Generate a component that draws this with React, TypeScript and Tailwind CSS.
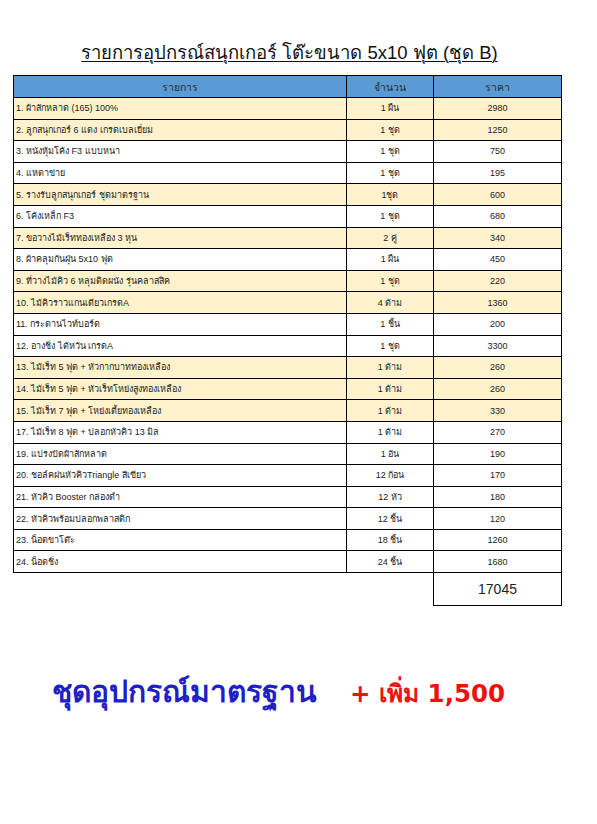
import React from "react";

const rows = [
  { name: "1. ผ้าสักหลาด (165) 100%", qty: "1 ผืน", price: "2980", hl: true },
  { name: "2. ลูกสนุกเกอร์ 6 แดง เกรดเบลเยี่ยม", qty: "1 ชุด", price: "1250", hl: true },
  { name: "3. หนังหุ้มโค้ง F3 แบบหนา", qty: "1 ชุด", price: "750", hl: false },
  { name: "4. แหตาข่าย", qty: "1 ชุด", price: "195", hl: false },
  { name: "5. รางรับลูกสนุกเกอร์ ชุดมาตรฐาน", qty: "1ชุด", price: "600", hl: true },
  { name: "6. โค้งเหล็ก F3", qty: "1 ชุด", price: "680", hl: false },
  { name: "7. ขอวางไม้เร็ททองเหลือง 3 หุน", qty: "2 คู่", price: "340", hl: true },
  { name: "8. ผ้าคลุมกันฝุ่น 5x10 ฟุต", qty: "1 ผืน", price: "450", hl: false },
  { name: "9. ที่วางไม้คิว 6 หลุมติดผนัง รุ่นคลาสสิค", qty: "1 ชุด", price: "220", hl: true },
  { name: "10. ไม้คิวราวแกนเดียวเกรดA", qty: "4 ด้าม", price: "1360", hl: true },
  { name: "11. กระดานไวท์บอร์ด", qty: "1 ชิ้น", price: "200", hl: false },
  { name: "12. อางชิ่ง ไต้หวัน เกรดA", qty: "1 ชุด", price: "3300", hl: false },
  { name: "13. ไม้เร็ท 5 ฟุต + หัวกากบาททองเหลือง", qty: "1 ด้าม", price: "260", hl: true },
  { name: "14. ไม้เร็ท 5 ฟุต + หัวเร็ทโหย่งสูงทองเหลือง", qty: "1 ด้าม", price: "260", hl: true },
  { name: "15. ไม้เร็ท 7 ฟุต + โหย่งเตี้ยทองเหลือง", qty: "1 ด้าม", price: "330", hl: true },
  { name: "17. ไม้เร็ท 8 ฟุต + ปลอกหัวคิว 13 มิล", qty: "1 ด้าม", price: "270", hl: false },
  { name: "19. แปรงปัดผ้าสักหลาด", qty: "1 อัน", price: "190", hl: false },
  { name: "20. ชอล์คฝนหัวคิวTriangle สีเขียว", qty: "12 ก้อน", price: "170", hl: false },
  { name: "21. หัวคิว Booster กล่องดำ", qty: "12 หัว", price: "180", hl: false },
  { name: "22. หัวคิวพร้อมปลอกพลาสติก", qty: "12 ชิ้น", price: "120", hl: false },
  { name: "23. น็อตขาโต๊ะ", qty: "18 ชิ้น", price: "1260", hl: false },
  { name: "24. น็อตชิ่ง", qty: "24 ชิ้น", price: "1680", hl: false },
];

export default function App() {
  return (
    <div className="w-[597px] h-[824px] bg-white font-['Tahoma','Liberation_Sans',sans-serif] text-[#222]">
      {/* Title */}
      <div className="pt-[41px] pr-[18px] text-center">
        <h1 className="text-[18.5px] leading-[23px] underline underline-offset-2 decoration-1 text-[#111]">
          รายการอุปกรณ์สนุกเกอร์ โต๊ะขนาด 5x10 ฟุต (ชุด B)
        </h1>
      </div>

      {/* Table */}
      <table className="mt-[11px] ml-[13px] border-collapse text-[9px] leading-[20px]">
        <colgroup>
          <col className="w-[333px]" />
          <col className="w-[87px]" />
          <col className="w-[128px]" />
        </colgroup>
        <thead>
          <tr className="bg-[#5b9bd5] h-[22px] text-[10.5px] text-[#2a2a2a]">
            <th className="border border-black font-normal">รายการ</th>
            <th className="border border-black font-normal">จำนวน</th>
            <th className="border border-black font-normal">ราคา</th>
          </tr>
        </thead>
        <tbody>
          {rows.map((r) => (
            <tr key={r.name} className={`h-[21.6px] ${r.hl ? "bg-[#fff2cc]" : "bg-white"}`}>
              <td className="border border-black pl-[2px] text-left whitespace-nowrap">{r.name}</td>
              <td className="border border-black text-center">{r.qty}</td>
              <td className="border border-black text-center">{r.price}</td>
            </tr>
          ))}
          <tr className="h-[33px]">
            <td />
            <td className="border-r border-black" />
            <td className="border border-black text-center text-[14px]">17045</td>
          </tr>
        </tbody>
      </table>

      {/* Footer */}
      <div className="mt-[63px] flex items-baseline pl-[52px] font-['Tahoma','DejaVu_Sans',sans-serif] font-bold">
        <span className="text-[30px] text-[#1f1fc8]">ชุดอุปกรณ์มาตรฐาน</span>
        <span className="ml-[33px] text-[24.5px] text-[#ee1111]">+ เพิ่ม 1,500</span>
      </div>
    </div>
  );
}
